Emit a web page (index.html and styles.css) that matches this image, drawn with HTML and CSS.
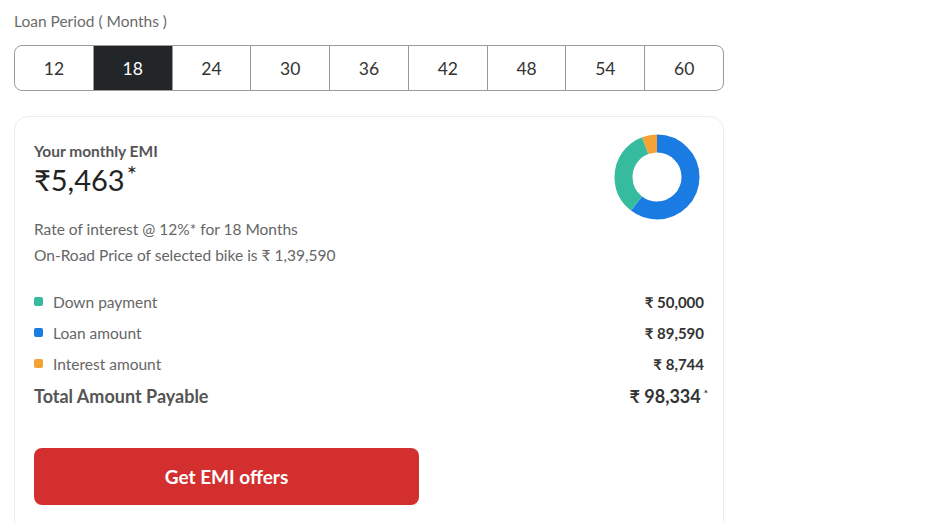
FILE: index.html
```html
<!DOCTYPE html>
<html lang="en">

<head>
    <meta charset="UTF-8">
    <meta name="viewport" content="width=device-width, initial-scale=1.0">
    <title>EMI Calculator</title>
    <link rel="stylesheet" href="styles.css">
</head>

<body>
    <div class="emi-wrap">
        <div class="period-label">Loan Period ( Months )</div>

        <!-- loan period tabs -->
        <div class="period-tabs">
            <div class="period-tab">12</div>
            <div class="period-tab active">18</div>
            <div class="period-tab">24</div>
            <div class="period-tab">30</div>
            <div class="period-tab">36</div>
            <div class="period-tab">42</div>
            <div class="period-tab">48</div>
            <div class="period-tab">54</div>
            <div class="period-tab">60</div>
        </div>

        <!-- EMI summary card -->
        <div class="emi-card">
            <div class="emi-head">
                <div class="emi-main">
                    <div class="emi-title">Your monthly EMI</div>
                    <div class="emi-value">₹5,463<sup>*</sup></div>
                </div>
                <svg class="emi-donut" width="86" height="86" viewBox="0 0 86 86">
                    <g transform="rotate(-90 43 43)">
                        <circle cx="43" cy="43" r="33.5" fill="none" stroke="#1a7be2" stroke-width="18"
                            stroke-dasharray="127.1 210.5" stroke-dashoffset="0"></circle>
                        <circle cx="43" cy="43" r="33.5" fill="none" stroke="#36bb9f" stroke-width="18"
                            stroke-dasharray="71 210.5" stroke-dashoffset="-127.1"></circle>
                        <circle cx="43" cy="43" r="33.5" fill="none" stroke="#f5a235" stroke-width="18"
                            stroke-dasharray="12.4 210.5" stroke-dashoffset="-198.1"></circle>
                    </g>
                </svg>
            </div>

            <div class="emi-info">Rate of interest @ 12%* for 18 Months</div>
            <div class="emi-info">On-Road Price of selected bike is ₹ 1,39,590</div>

            <div class="emi-rows">
                <div class="emi-row">
                    <span class="emi-key"><i class="dot dot-green"></i>Down payment</span>
                    <span class="emi-amt">₹ 50,000</span>
                </div>
                <div class="emi-row">
                    <span class="emi-key"><i class="dot dot-blue"></i>Loan amount</span>
                    <span class="emi-amt">₹ 89,590</span>
                </div>
                <div class="emi-row">
                    <span class="emi-key"><i class="dot dot-orange"></i>Interest amount</span>
                    <span class="emi-amt">₹ 8,744</span>
                </div>
                <div class="emi-row total">
                    <span class="emi-key">Total Amount Payable</span>
                    <span class="emi-amt">₹ 98,334<sup>*</sup></span>
                </div>
            </div>

            <button class="emi-btn">Get EMI offers</button>
        </div>
    </div>
</body>

</html>
```

FILE: styles.css
```css
body {
    margin: 0;
    background: #fff;
    font-family: Lato, 'Open Sans', sans-serif;
    color: #333;
}

.emi-wrap {
    width: 710px;
    padding: 11px 14px 0;
}

.period-label {
    font-size: 15.5px;
    line-height: 20px;
    color: #6b6b6b;
    margin-bottom: 14px;
}

/* 기간 탭 */
.period-tabs {
    display: flex;
    border: 1px solid #9a9a9a;
    border-radius: 8px;
    overflow: hidden;
    height: 44px;
}

.period-tab {
    flex: 1;
    display: flex;
    align-items: center;
    justify-content: center;
    font-size: 17.5px;
    color: #333;
    border-left: 1px solid #9a9a9a;
}

.period-tab:first-child {
    border-left: none;
}

.period-tab.active {
    background: #222629;
    color: #fff;
}

/* EMI 카드 */
.emi-card {
    margin-top: 25px;
    border: 1px solid #ececec;
    border-radius: 14px;
    padding: 17px 19px 30px;
}

.emi-head {
    display: flex;
    justify-content: space-between;
    align-items: flex-start;
    padding-right: 4px;
}

.emi-main {
    padding-top: 7px;
}

.emi-title {
    font-size: 15.5px;
    font-weight: bold;
    line-height: 20px;
    color: #555;
}

.emi-value {
    margin-top: 2px;
    font-size: 29px;
    line-height: 34px;
    color: #222;
}

.emi-value sup {
    font-size: 24px;
    margin-left: 2px;
    vertical-align: 8px;
    line-height: 0;
}

.emi-info {
    font-size: 15.5px;
    line-height: 26px;
    color: #666;
}

.emi-head + .emi-info {
    margin-top: -4px;
}

.emi-rows {
    margin-top: 18px;
}

.emi-row {
    display: flex;
    justify-content: space-between;
    align-items: center;
    height: 31px;
    font-size: 15.5px;
}

.emi-key {
    display: flex;
    align-items: center;
    color: #666;
}

.emi-amt {
    font-size: 15px;
    font-weight: bold;
    color: #333;
}

.dot {
    width: 9px;
    height: 9px;
    border-radius: 2px;
    margin-right: 10px;
}

.dot-green {
    background: #36bb9f;
}

.dot-blue {
    background: #1a7be2;
}

.dot-orange {
    background: #f5a235;
}

.emi-row.total {
    height: 33px;
}

.emi-row.total .emi-key {
    font-size: 18px;
    font-weight: bold;
    color: #555;
}

.emi-row.total .emi-amt {
    font-size: 18px;
    margin-right: -4px;
}

.emi-row.total sup {
    font-size: 10px;
    margin-left: 3px;
    vertical-align: 6px;
}

.emi-btn {
    display: block;
    margin-top: 36px;
    width: 385px;
    height: 57px;
    border: none;
    border-radius: 8px;
    background: #d32f2f;
    color: #fff;
    font-family: inherit;
    font-size: 19px;
    font-weight: bold;
    cursor: pointer;
}
```
